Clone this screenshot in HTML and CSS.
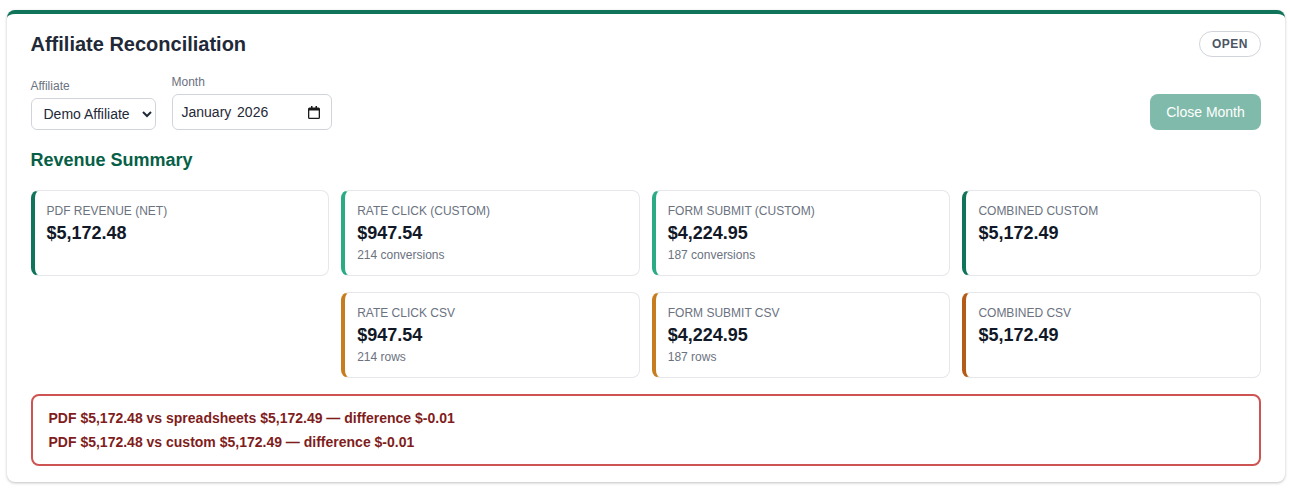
FILE: index.html
```html
<!DOCTYPE html>
<html lang="en">
<head>
  <meta charset="UTF-8">
  <meta name="viewport" content="width=device-width, initial-scale=1.0">
  <title>Affiliate Reconciliation</title>
  <link rel="stylesheet" href="styles.css">
</head>
<body>
  <div class="panel">
    <div class="panel-header">
      <h1>Affiliate Reconciliation</h1>
      <span class="status-pill">OPEN</span>
    </div>

    <div class="controls">
      <div class="field">
        <label for="affiliate">Affiliate</label>
        <select id="affiliate">
          <option>Demo Affiliate</option>
        </select>
      </div>
      <div class="field">
        <label>Month</label>
        <div class="month-input">
          <span class="month-value">January&nbsp; 2026</span>
          <svg class="calendar-icon" width="12" height="13" viewBox="0 0 12 13">
            <path d="M3 0h1.5v1.5h3V0H9v1.5h1.5A1.5 1.5 0 0 1 12 3v8.5a1.5 1.5 0 0 1-1.5 1.5h-9A1.5 1.5 0 0 1 0 11.5V3a1.5 1.5 0 0 1 1.5-1.5H3V0zM1.3 4.5v7.2h9.4V4.5H1.3z" fill="#1a1a1a" fill-rule="evenodd"/>
          </svg>
        </div>
      </div>
      <button class="close-btn" disabled>Close Month</button>
    </div>

    <h2>Revenue Summary</h2>

    <div class="summary-grid">
      <div class="stat stat-dark">
        <div class="stat-label">PDF REVENUE (NET)</div>
        <div class="stat-value">$5,172.48</div>
      </div>
      <div class="stat stat-teal">
        <div class="stat-label">RATE CLICK (CUSTOM)</div>
        <div class="stat-value">$947.54</div>
        <div class="stat-note">214 conversions</div>
      </div>
      <div class="stat stat-teal">
        <div class="stat-label">FORM SUBMIT (CUSTOM)</div>
        <div class="stat-value">$4,224.95</div>
        <div class="stat-note">187 conversions</div>
      </div>
      <div class="stat stat-dark">
        <div class="stat-label">COMBINED CUSTOM</div>
        <div class="stat-value">$5,172.49</div>
      </div>

      <div class="grid-spacer"></div>
      <div class="stat stat-amber">
        <div class="stat-label">RATE CLICK CSV</div>
        <div class="stat-value">$947.54</div>
        <div class="stat-note">214 rows</div>
      </div>
      <div class="stat stat-amber">
        <div class="stat-label">FORM SUBMIT CSV</div>
        <div class="stat-value">$4,224.95</div>
        <div class="stat-note">187 rows</div>
      </div>
      <div class="stat stat-rust">
        <div class="stat-label">COMBINED CSV</div>
        <div class="stat-value">$5,172.49</div>
      </div>
    </div>

    <div class="alert">
      <p>PDF $5,172.48 vs spreadsheets $5,172.49 — difference $-0.01</p>
      <p>PDF $5,172.48 vs custom $5,172.49 — difference $-0.01</p>
    </div>
  </div>
</body>
</html>
```

FILE: styles.css
```css
* {
  box-sizing: border-box;
}

body {
  margin: 0;
  padding: 10px 5px 4px 7px;
  background-color: #fff;
  font-family: "Liberation Sans", Arial, sans-serif;
  color: #1f2937;
}

.panel {
  background-color: #fff;
  border-top: 4px solid #10745a;
  border-radius: 8px;
  box-shadow: 0 1px 3px rgba(0, 0, 0, 0.25);
  padding: 17px 24px 16px 23.5px;
}

.panel-header {
  display: flex;
  align-items: center;
  justify-content: space-between;
  margin-bottom: 18px;
}

h1 {
  margin: 0;
  font-size: 20px;
  font-weight: 700;
  color: #1f2937;
}

.status-pill {
  border: 1px solid #d1d5db;
  border-radius: 999px;
  padding: 5px 12px;
  font-size: 12px;
  font-weight: 700;
  letter-spacing: 0.5px;
  color: #4b5563;
}

.controls {
  display: flex;
  align-items: flex-end;
  gap: 16px;
  margin-bottom: 20px;
}

.field {
  display: flex;
  flex-direction: column;
  gap: 5px;
}

.field label {
  font-size: 12px;
  color: #6b7280;
}

select {
  height: 32px;
  width: 125px;
  padding: 0 8px;
  border: 1px solid #d1d5db;
  border-radius: 6px;
  background-color: #fff;
  font-family: inherit;
  font-size: 14px;
  color: #1f2937;
}

.month-input {
  display: flex;
  align-items: center;
  justify-content: space-between;
  height: 36px;
  width: 160px;
  padding: 0 11px 0 9px;
  border: 1px solid #d1d5db;
  border-radius: 6px;
  background-color: #fff;
  font-size: 14px;
  color: #1f2937;
}

.month-value {
  word-spacing: -1px;
}

.close-btn {
  margin-left: auto;
  height: 36px;
  width: 111px;
  border: none;
  border-radius: 8px;
  background-color: #047857;
  opacity: 0.5;
  color: #fff;
  font-family: inherit;
  font-size: 14px;
}

h2 {
  margin: 0 0 19px;
  font-size: 18px;
  font-weight: 700;
  color: #065f46;
}

.summary-grid {
  display: grid;
  grid-template-columns: repeat(4, 1fr);
  column-gap: 12px;
  row-gap: 16px;
  margin-bottom: 16px;
}

.stat {
  height: 86px;
  padding: 13px 12px;
  border: 1px solid #e5e7eb;
  border-left-width: 4px;
  border-radius: 8px;
}

.stat-dark { border-left-color: #10745a; }
.stat-teal { border-left-color: #2bab85; }
.stat-amber { border-left-color: #c77d1f; }
.stat-rust { border-left-color: #b45c17; }

.stat-label {
  font-size: 12px;
  line-height: 15px;
  color: #6b7280;
}

.stat-value {
  margin-top: 3px;
  font-size: 18px;
  line-height: 22px;
  font-weight: 700;
  color: #111827;
}

.stat-note {
  margin-top: 4px;
  font-size: 12px;
  line-height: 15px;
  color: #6b7280;
}

.alert {
  border: 2px solid #cd5452;
  border-radius: 8px;
  padding: 10px 16px;
  color: #7f1d1d;
  font-size: 14px;
  font-weight: 700;
}

.alert p {
  margin: 0;
  line-height: 24px;
}
```
